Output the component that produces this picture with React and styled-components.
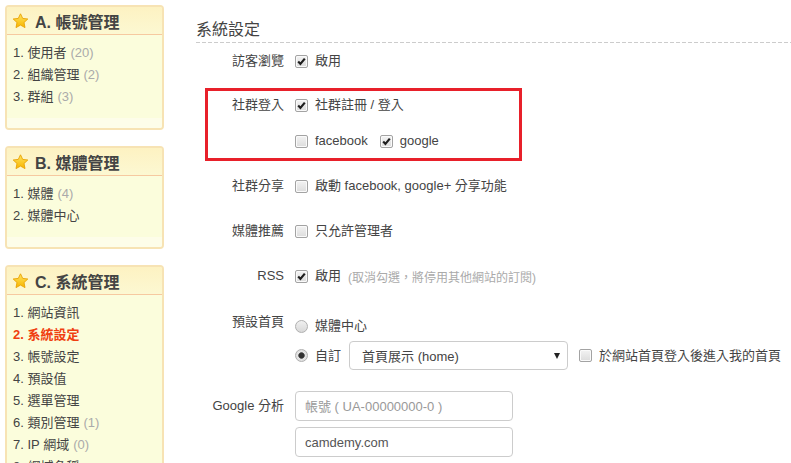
import React from 'react';
import styled, { createGlobalStyle } from 'styled-components';

const GlobalStyle = createGlobalStyle`
	*, *::before, *::after { box-sizing: border-box; }
	body {
		margin: 0;
		background: #fff;
		font-family: "Liberation Sans", Arial, "Noto Sans CJK TC", sans-serif;
		font-size: 13px;
		color: #333;
	}
`;

const menus = [
	{
		title: 'A. 帳號管理',
		items: [
			{ name: '使用者', count: 20 },
			{ name: '組織管理', count: 2 },
			{ name: '群組', count: 3 },
		],
	},
	{
		title: 'B. 媒體管理',
		items: [{ name: '媒體', count: 4 }, { name: '媒體中心' }],
	},
	{
		title: 'C. 系統管理',
		items: [
			{ name: '網站資訊' },
			{ name: '系統設定', active: true },
			{ name: '帳號設定' },
			{ name: '預設值' },
			{ name: '選單管理' },
			{ name: '類別管理', count: 1 },
			{ name: 'IP 網域', count: 0 },
			{ name: '網域名稱' },
		],
	},
];

const Star = () => (
	<svg width='17' height='16' viewBox='0 0 17 16'>
		<defs>
			<linearGradient id='starFill' x1='0' y1='0' x2='0' y2='1'>
				<stop offset='0' stopColor='#ffe45c' />
				<stop offset='1' stopColor='#f7b500' />
			</linearGradient>
		</defs>
		<path
			d='M8.5 0.8 L10.7 5.4 L15.8 6 L12 9.5 L13 14.6 L8.5 12.1 L4 14.6 L5 9.5 L1.2 6 L6.3 5.4 Z'
			fill='url(#starFill)'
			stroke='#e9a100'
			strokeWidth='0.9'
			strokeLinejoin='round'
		/>
	</svg>
);

const Check = ({ checked }) => (
	<CheckBox>
		{checked && (
			<svg width='11' height='11' viewBox='0 0 11 11'>
				<path d='M2.2 5.6 L4.4 7.9 L8.8 2.6' fill='none' stroke='#1e1e1e' strokeWidth='2.2' />
			</svg>
		)}
	</CheckBox>
);

const App = () => {
	return (
		<>
			<GlobalStyle />
			<Page>
				<Sidebar>
					{menus.map((menu) => (
						<Panel key={menu.title}>
							<PanelHead>
								<Star />
								<span>{menu.title}</span>
							</PanelHead>
							<ItemList>
								{menu.items.map((item, i) => (
									<Item key={item.name} active={item.active}>
										{i + 1}. {item.name}
										{item.count !== undefined && <Count>({item.count})</Count>}
									</Item>
								))}
							</ItemList>
							<PanelFoot />
						</Panel>
					))}
				</Sidebar>

				<Main>
					<Heading>系統設定</Heading>

					<Row mt={7}>
						<Label>訪客瀏覽</Label>
						<Option>
							<Check checked />
							啟用
						</Option>
					</Row>

					<Highlight>
						<Row>
							<Label>社群登入</Label>
							<Option>
								<Check checked />
								社群註冊 / 登入
							</Option>
						</Row>
						<Row mt={14}>
							<Label />
							<Option>
								<Check />
								facebook
							</Option>
							<Option>
								<Check checked />
								google
							</Option>
						</Row>
					</Highlight>

					<Row mt={23}>
						<Label>社群分享</Label>
						<Option>
							<Check />
							啟動 facebook, google+ 分享功能
						</Option>
					</Row>

					<Row mt={23}>
						<Label>媒體推薦</Label>
						<Option>
							<Check />
							只允許管理者
						</Option>
					</Row>

					<Row mt={23}>
						<Label>RSS</Label>
						<Option>
							<Check checked />
							啟用
						</Option>
						<Note>(取消勾選，將停用其他網站的訂閱)</Note>
					</Row>

					<Row mt={24} top>
						<Label>預設首頁</Label>
						<Controls>
							<ChoiceLine>
								<Option>
									<Radio />
									媒體中心
								</Option>
							</ChoiceLine>
							<ChoiceLine>
								<Option>
									<Radio checked />
									自訂
								</Option>
								<Select>
									<span>首頁展示 (home)</span>
									<Caret />
								</Select>
								<Option>
									<Check />
									於網站首頁登入後進入我的首頁
								</Option>
							</ChoiceLine>
						</Controls>
					</Row>

					<Row mt={21} top>
						<Label tall>Google 分析</Label>
						<Fields>
							<Input placeholder='帳號 ( UA-00000000-0 )' readOnly />
							<Input defaultValue='camdemy.com' readOnly />
						</Fields>
					</Row>
				</Main>
			</Page>
		</>
	);
};

export default App;

const Page = styled.div`
	display: flex;
	align-items: flex-start;
	height: 463px;
	overflow: hidden;
`;

const Sidebar = styled.aside`
	flex-shrink: 0;
	width: 164px;
	padding: 5px 0 0 5px;
	display: flex;
	flex-direction: column;
	gap: 16px;
`;

const Panel = styled.section`
	border: 2px solid #f7e3b4;
	border-radius: 4px;
	background: #fbfddc;
	overflow: hidden;
`;

const PanelHead = styled.div`
	height: 28px;
	display: flex;
	align-items: center;
	gap: 6px;
	padding-left: 5px;
	background: linear-gradient(#fdf2c2, #fcf8d2);
	border-bottom: 1px solid #f6c9a0;
	font-size: 16px;
	font-weight: bold;
	color: #444;
`;

const ItemList = styled.ul`
	list-style: none;
	margin: 0;
	padding: 7px 0 10px 6px;
`;

const Item = styled.li`
	line-height: 22px;
	white-space: nowrap;
	color: ${(p) => (p.active ? '#f03f10' : '#444')};
	font-weight: ${(p) => (p.active ? 'bold' : 'normal')};
`;

const Count = styled.span`
	margin-left: 4px;
	color: #aaa;
`;

const PanelFoot = styled.div`
	height: 10px;
	background: #fdfde9;
`;

const Main = styled.main`
	flex: 1;
	padding-left: 32px;
`;

const Heading = styled.h2`
	margin: 20px 0 0;
	padding-bottom: 3px;
	font-size: 16px;
	font-weight: normal;
	line-height: 20px;
	color: #444;
	background: repeating-linear-gradient(to right, #ccc 0 4px, transparent 4px 6px) left bottom / 100% 1px
		no-repeat;
`;

const Row = styled.div`
	display: flex;
	align-items: ${(p) => (p.top ? 'flex-start' : 'center')};
	min-height: 22px;
	margin-top: ${(p) => p.mt || 0}px;
`;

const Label = styled.div`
	flex-shrink: 0;
	width: 99px;
	padding-right: 11px;
	text-align: right;
	line-height: ${(p) => (p.tall ? '30px' : '22px')};
	color: #444;
`;

const Option = styled.label`
	display: inline-flex;
	align-items: center;
	gap: 7px;
	margin-right: 12px;
	line-height: 22px;
	color: #444;
	white-space: nowrap;
`;

const CheckBox = styled.span`
	width: 13px;
	height: 13px;
	display: inline-flex;
	align-items: center;
	justify-content: center;
	border: 1px solid #a3a3a3;
	border-radius: 2px;
	background: linear-gradient(#f3f3f3, #dcdcdc);
	box-shadow: inset 0 0 0 1px #fafafa;
`;

const Radio = styled.span`
	width: 13px;
	height: 13px;
	border-radius: 50%;
	border: 1px solid #b0b0b0;
	background: ${(p) =>
		p.checked
			? 'radial-gradient(circle, #333 0 2.5px, #6a6a6a 3px, #e6e6e6 3.6px, #d6d6d6 100%)'
			: 'linear-gradient(#f0f0f0, #d8d8d8)'};
`;

const Note = styled.span`
	font-size: 12px;
	color: #aaa;
	margin-left: -5px;
`;

const Highlight = styled.div`
	position: relative;
	margin-top: 22px;

	&::after {
		content: '';
		position: absolute;
		left: 9px;
		top: -6px;
		width: 317px;
		height: 73px;
		border: 3px solid #e8202a;
		pointer-events: none;
	}
`;

const Controls = styled.div`
	display: flex;
	flex-direction: column;
	gap: 4px;
	padding-top: 4px;
`;

const ChoiceLine = styled.div`
	display: flex;
	align-items: center;
	min-height: 22px;

	& > ${Option}:first-child {
		margin-right: 8px;
	}
`;

const Select = styled.div`
	width: 219px;
	height: 29px;
	display: flex;
	align-items: center;
	justify-content: space-between;
	padding: 0 7px 0 12px;
	margin-right: 11px;
	border: 1px solid #ccc;
	border-radius: 4px;
	color: #444;
	background: #fff;
`;

const Caret = styled.span`
	width: 0;
	height: 0;
	border-left: 3.5px solid transparent;
	border-right: 3.5px solid transparent;
	border-top: 6px solid #222;
`;

const Fields = styled.div`
	display: flex;
	flex-direction: column;
	gap: 6px;
`;

const Input = styled.input`
	width: 218px;
	height: 30px;
	padding: 0 9px;
	border: 1px solid #ccc;
	border-radius: 4px;
	font: inherit;
	color: #555;
	outline: none;

	&::placeholder {
		color: #999;
	}
`;
